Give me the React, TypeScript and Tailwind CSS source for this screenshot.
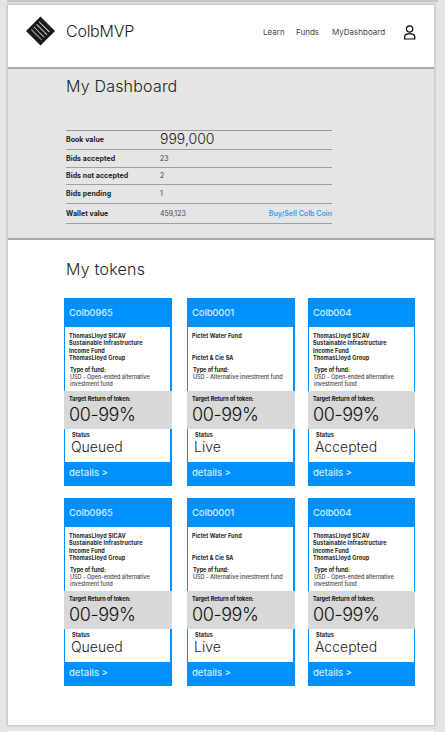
type Token = {
  name: string;
  fund: string[];
  type: string[];
  status: string;
  cardClass: string;
  bandClass: string;
};

const infrastructure = ["ThomasLloyd SICAV", "Sustainable Infrastructure", "Income Fund", "ThomasLloyd Group"];
const water = ["Pictet Water Fund", "", "", "Pictet & Cie SA"];

const tokens: Token[] = [
  {
    name: "Colb0965",
    fund: infrastructure,
    type: ["USD - Open-ended alternative", "investment fund"],
    status: "Queued",
    cardClass: "w-[108px] border-r-2 mr-[15px]",
    bandClass: "-mr-[2px]",
  },
  {
    name: "Colb0001",
    fund: water,
    type: ["USD - Alternative investment fund"],
    status: "Live",
    cardClass: "w-[108px] border-r-2 mr-[13px]",
    bandClass: "-mr-[2px]",
  },
  {
    name: "Colb004",
    fund: infrastructure,
    type: ["USD - Open-ended alternative", "investment fund"],
    status: "Accepted",
    cardClass: "w-[107px] border-r",
    bandClass: "-mr-px",
  },
];

const rows = [
  { label: "Book value", value: "999,000", h: "h-[19px]", big: true },
  { label: "Bids accepted", value: "23", h: "h-[18px]" },
  { label: "Bids not accepted", value: "2", h: "h-[17px]" },
  { label: "Bids pending", value: "1", h: "h-[19px]" },
  { label: "Wallet value", value: "459,123", h: "h-[20px]", link: "Buy/Sell Colb Coin" },
];

function Logo() {
  return (
    <svg className="h-[30px] w-[30px]" viewBox="0 0 30 30">
      <path d="M14.5.5 29 15 14.5 29.5 0 15Z" fill="#17171a" />
      <g stroke="#dcdcdc" strokeWidth="1.2" strokeDasharray="1.2 .25">
        <path d="M13.2 5.8 23.6 16.2M10.6 8.4 21 18.8" />
        <path d="M8 11 18.4 21.4M5.4 13.6 15.8 24" stroke="#b4b4b4" />
        <path d="M16.2 3.8 25.6 13.2" stroke="#555" strokeWidth=".7" />
      </g>
    </svg>
  );
}

function UserIcon() {
  return (
    <svg className="h-[15px] w-[12px]" viewBox="0 0 12 15" fill="none" stroke="#050505" strokeWidth="1.2">
      <circle cx="5.6" cy="4" r="3.2" />
      <path d="M.6 14V12.4C.6 10 2.4 8.8 4.2 8.8H7C8.8 8.8 10.8 10 10.8 12.4V14Z" />
    </svg>
  );
}

function Card({ token }: { token: Token }) {
  return (
    <article className={`h-[188px] shrink-0 whitespace-nowrap border-l border-[#0091ff] bg-white ${token.cardClass}`}>
      <h3 className="h-[29px] bg-[#0091ff] pl-1 text-[9.5px] font-medium leading-[30px] tracking-[-0.15px] text-[#d5edff]">
        {token.name}
      </h3>
      <div className="h-[64px] pl-1 pt-[6px] text-[5.5px] leading-[7.4px] text-[#222]">
        {token.fund.map((line, i) => (
          <p key={i} className="h-[7.4px] font-bold tracking-[0.13px]">{line}</p>
        ))}
        <p className="mt-[4px] pl-px font-bold">Type of fund:</p>
        {token.type.map((line) => (
          <p key={line} className="pl-px font-medium leading-[7px] text-[#444]">{line}</p>
        ))}
      </div>
      <div className={`-ml-px h-[38px] bg-[#d8d8d8] pl-[5px] pt-[4px] text-[#111] ${token.bandClass}`}>
        <p className="text-[5.5px] font-bold leading-[9px]">Target Return of token:</p>
        <p className="text-[18px] font-light leading-[21px] tracking-[-0.4px]">00-99%</p>
      </div>
      <div className="h-[33px] pl-[6px] pt-[3px] text-[#222]">
        <p className="pl-px text-[5.5px] font-bold leading-[7px] tracking-[0.1px]">Status</p>
        <p className="text-[14px] font-light leading-[16px]">{token.status}</p>
      </div>
      <div className="h-6 bg-[#0091ff] pl-1 text-[9.5px] font-medium leading-[22px] text-[#d5edff]">details &gt;</div>
    </article>
  );
}

export default function App() {
  return (
    <div className="h-[732px] w-[445px] overflow-hidden bg-[#e5e5e5] font-['Inter','Liberation_Sans',sans-serif] text-[#222]">
      <div className="mx-[7px] mb-[3px] h-[2px] bg-[#c4c4c4]" />
      <div className="ml-2 h-[720px] w-[426px] bg-white shadow-[0_0_2px_1px_#bdbdbd]">
        <header className="flex h-[62px] items-center whitespace-nowrap pl-[18px]">
          <div className="-mt-[10px]"><Logo /></div>
          <h1 className="-mt-[10px] ml-[10px] w-[197px] text-[16px] font-light tracking-[-0.25px]">ColbMVP</h1>
          <nav className="-mt-[9px] flex text-[8px] text-[#444]">
            <span className="w-[33px]">Learn</span>
            <span className="w-[36px]">Funds</span>
            <span className="w-[72px]">MyDashboard</span>
          </nav>
          <div className="-mt-[8px]"><UserIcon /></div>
        </header>
        <section className="h-[173px] border-y-2 border-[#a8a8a8] bg-[#e5e5e5] pl-[58px]">
          <h2 className="h-[61px] pt-[6px] text-[16px] font-light leading-[23px] tracking-[0.2px]">My Dashboard</h2>
          <div className="w-[266px] whitespace-nowrap border-t border-[#999]">
            {rows.map((r) => (
              <div key={r.label} className={`flex items-center border-b border-[#a0a0a0] text-[7px] ${r.h}`}>
                <span className="w-[94px] pt-px font-bold tracking-[0.05px]">{r.label}</span>
                <span className={r.big ? "pb-[2px] text-[14px] font-light leading-[16px]" : "pt-px text-[#444]"}>
                  {r.value}
                </span>
                {r.link && <a className="ml-auto pt-px font-semibold tracking-[0.05px] text-[#2b9ff0]">{r.link}</a>}
              </div>
            ))}
          </div>
        </section>
        <section className="pl-[56px]">
          <h2 className="h-[58px] pl-[2px] pt-[18px] text-[16px] font-light leading-[23px] tracking-[0.25px]">My tokens</h2>
          {[0, 1].map((row) => (
            <div key={row} className="mb-3 flex">
              {tokens.map((token) => <Card key={token.name} token={token} />)}
            </div>
          ))}
        </section>
      </div>
      <div className="ml-2 mt-[6px] h-px w-[426px] bg-white" />
    </div>
  );
}
